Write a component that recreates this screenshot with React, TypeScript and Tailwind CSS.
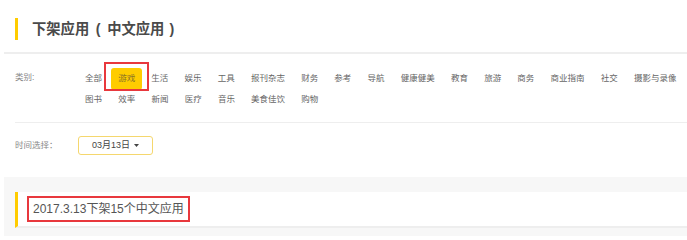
const categories = [
  '全部', '游戏', '生活', '娱乐', '工具', '报刊杂志', '财务', '参考', '导航', '健康健美',
  '教育', '旅游', '商务', '商业指南', '社交', '摄影与录像', '图书', '效率', '新闻', '医疗',
  '音乐', '美食佳饮', '购物',
];

export default function App() {
  const active = '游戏';

  return (
    <div
      className="w-[687px] h-[236px] overflow-hidden bg-white"
      style={{ fontFamily: '"Liberation Sans", "Noto Sans CJK SC", sans-serif' }}
    >
      {/* page title */}
      <div className="ml-[4px] flex items-center border-b-2 border-[#eeeeee] pt-[18px] pb-[12px] pl-[11px]">
        <span className="h-[22px] w-[3px] bg-[#ffcc00]" />
        <h1 className="ml-[14px] text-[14.3px] font-bold leading-none text-[#4a4a4a]">
          下架应用<span className="inline-block w-[18px] text-center">(</span>中文应用
          <span className="inline-block w-[15px] text-center">)</span>
        </h1>
      </div>

      {/* category filter */}
      <div className="ml-[15px] flex border-b border-[#eeeeee] pt-[14px] pb-[12px]">
        <span className="w-[62px] shrink-0 text-[8.5px] leading-[18px] text-[#888888]">类别:</span>
        <div className="flex flex-1 flex-wrap">
          {categories.map((name) =>
            name === active ? (
              <div key={name} className="relative mx-[1px] flex h-[21px] items-center">
                <span className="flex h-[22px] items-center rounded-[3px] bg-[#ffcc00] px-[7px] text-[8.5px] text-[#8a7226]">
                  {name}
                </span>
                <span className="absolute -left-[7px] -right-[7px] -top-[6px] -bottom-[2px] border-2 border-[#e8383d]" />
              </div>
            ) : (
              <span
                key={name}
                className="h-[21px] whitespace-nowrap px-[8.1px] text-[8.5px] leading-[21px] text-[#666666]"
              >
                {name}
              </span>
            )
          )}
        </div>
      </div>

      {/* date selector */}
      <div className="ml-[15px] flex items-center pt-[13px]">
        <span className="w-[63px] text-[8.5px] text-[#888888]">时间选择：</span>
        <button className="flex h-[19px] w-[75px] items-center justify-center gap-[4px] rounded-[3px] border border-[#f5d76e] bg-white text-[9px] text-[#444444]">
          03月13日
          <svg width="5" height="3" viewBox="0 0 5 3">
            <path d="M0 0h5L2.5 3z" fill="#444444" />
          </svg>
        </button>
      </div>

      {/* result panel */}
      <div className="ml-[4px] mt-[22px] h-[80px] bg-[#f7f7f7] pt-[15px] pl-[11px]">
        <div className="flex h-[36px] items-center border-b-2 border-l-[3px] border-b-[#eeeeee] border-l-[#ffcc00] bg-white">
          <div className="ml-[9px] flex h-[26px] items-center border-2 border-[#e8383d] px-[4px] text-[12px] text-[#555555]">
            2017.3.13下架15个中文应用
          </div>
        </div>
      </div>
    </div>
  );
}
